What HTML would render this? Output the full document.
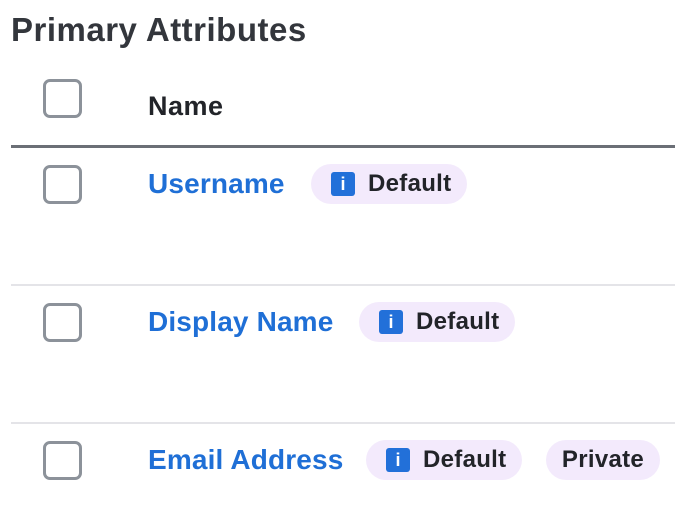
<!DOCTYPE html><html><head><style>
body{margin:0;width:675px;height:517px;background:#fff;font-family:"Liberation Sans",sans-serif;position:relative;overflow:hidden}
.a{position:absolute}
h1{position:absolute;left:11px;top:11px;margin:0;font-size:33px;font-weight:bold;color:#33363c;letter-spacing:0.5px}
.cb{position:absolute;left:43px;width:33px;height:33px;border:3px solid #8c929a;border-radius:7px}
.n{position:absolute;left:148px;font-size:28px;font-weight:bold;color:#1f6fd6;line-height:30px;letter-spacing:0.15px}
.b{position:absolute;height:40px;border-radius:20px;background:#f3eafc;font-size:24px;font-weight:bold;color:#222429;line-height:40px;box-sizing:border-box;letter-spacing:0.3px}
.i{position:absolute;left:20px;top:8px;width:24px;height:24px;background:#2270d9;border-radius:3px;color:#fff;font-size:18px;line-height:24px;text-align:center;font-weight:bold;letter-spacing:0}
.b span{position:absolute;left:57px}
.sep{position:absolute;left:11px;right:0;height:2px;background:#e4e4e8}
</style></head><body>
<h1>Primary Attributes</h1>
<div class="cb" style="top:79px"></div>
<div class="a" style="left:148px;top:91px;font-size:27px;font-weight:bold;color:#222429;letter-spacing:0.5px">Name</div>
<div class="a" style="left:11px;right:0;top:145px;height:3px;background:#6b6f76"></div>

<div class="cb" style="top:165px"></div>
<div class="n" style="top:169px">Username</div>
<div class="b" style="left:311px;top:164px;width:156px"><div class="i">i</div><span>Default</span></div>
<div class="sep" style="top:284px"></div>

<div class="cb" style="top:303px"></div>
<div class="n" style="top:307px">Display Name</div>
<div class="b" style="left:359px;top:302px;width:156px"><div class="i">i</div><span>Default</span></div>
<div class="sep" style="top:422px"></div>

<div class="cb" style="top:441px"></div>
<div class="n" style="top:445px">Email Address</div>
<div class="b" style="left:366px;top:440px;width:156px"><div class="i">i</div><span>Default</span></div>
<div class="b" style="left:546px;top:440px;width:114px;text-align:center">Private</div>
</body></html>
